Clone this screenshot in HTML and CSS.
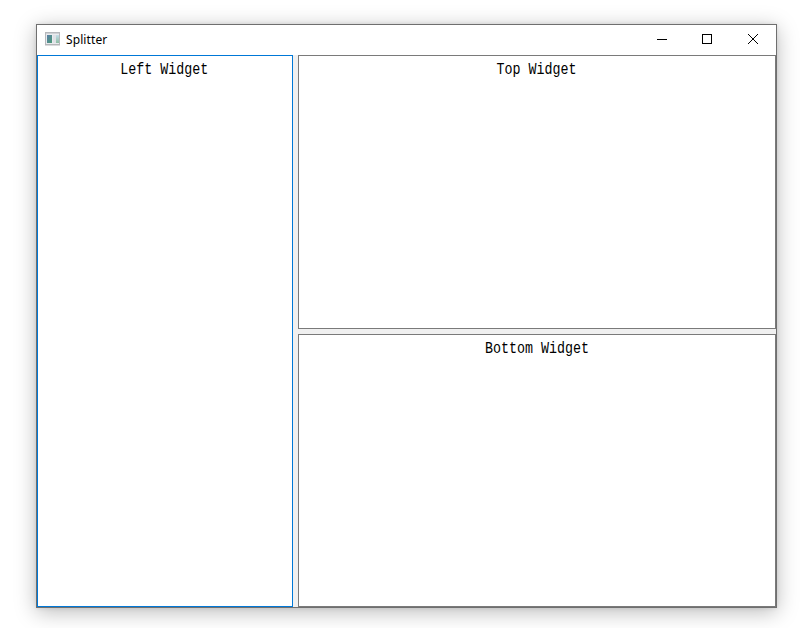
FILE: index.html
```html
<!DOCTYPE html>
<html lang="en">
<head>
<meta charset="utf-8">
<title>Splitter</title>
<link rel="stylesheet" href="styles.css">
</head>
<body>
<div class="window">
  <header class="titlebar">
    <svg class="app-icon" width="16" height="14" viewBox="0 0 16 14">
      <defs>
        <linearGradient id="pane" x1="0" y1="0" x2="1" y2="1">
          <stop offset="0" stop-color="#5b7fa6"/>
          <stop offset="1" stop-color="#4c9b78"/>
        </linearGradient>
        <linearGradient id="side" x1="0" y1="0" x2="0" y2="1">
          <stop offset="0" stop-color="#c3dce8"/>
          <stop offset="1" stop-color="#8fbda4"/>
        </linearGradient>
      </defs>
      <rect x=".5" y=".5" width="14" height="12.5" fill="#e9ebee" stroke="#b6b8bc"/>
      <path d="M1 1.5h13" stroke="#cfd1d5"/>
      <rect x="2" y="3" width="5" height="8" fill="url(#pane)"/>
      <rect x="8" y="3" width="3" height="8" fill="#dfe1e6"/>
      <rect x="11" y="3" width="3" height="8" fill="url(#side)"/>
      <path d="M0 12.5h15" stroke="#b4b6b8"/>
    </svg>
    <h1 class="title">Splitter</h1>
    <div class="controls">
      <button class="control" aria-label="Minimize"><svg width="10" height="10"><path d="M0 5.5h10"/></svg></button>
      <button class="control maximize" aria-label="Maximize"><svg width="10" height="10"><path d="M.5 .5h9v9h-9z"/></svg></button>
      <button class="control close" aria-label="Close"><svg width="10" height="10"><path d="M0 0l10 10M10 0L0 10"/></svg></button>
    </div>
  </header>
  <main class="splitter">
    <section class="pane focused"><span class="label">Left Widget</span></section>
    <div class="column">
      <section class="pane"><span class="label">Top Widget</span></section>
      <section class="pane"><span class="label">Bottom Widget</span></section>
    </div>
  </main>
</div>
</body>
</html>
```
FILE: styles.css
```css
* { box-sizing: border-box; }

body {
  margin: 0;
  height: 628px;
  padding: 24px 24px 20px 36px;
  overflow: hidden;
  background: #fff;
}

.window {
  display: flex;
  flex-direction: column;
  width: 741px;
  height: 584px;
  border: 1px solid #6f6f6f;
  background: #fff;
  box-shadow: 0 0 4px rgba(0, 0, 0, .1), 0 4px 20px rgba(0, 0, 0, .27);
}

.titlebar {
  display: flex;
  align-items: center;
  height: 30px;
  padding-left: 8px;
}

.app-icon { display: block; margin-top: -2px; }

.title {
  margin: 0 0 0 5px;
  font: 400 12px/18px "Noto Sans", "Open Sans", sans-serif;
  letter-spacing: .1px;
  color: #000;
}

.controls {
  display: flex;
  height: 30px;
  margin-left: auto;
}

.control {
  display: flex;
  align-items: center;
  justify-content: center;
  width: 46px;
  height: 28px;
  padding: 0;
  border: 0;
  background: none;
}

.maximize { width: 44px; }

.close {
  width: 47px;
  padding-left: 1px;
}

.control svg {
  display: block;
  fill: none;
  stroke: #000;
  stroke-width: 1;
  shape-rendering: crispEdges;
}

.close svg { shape-rendering: auto; }

.splitter {
  display: grid;
  grid-template-columns: 256px 478px;
  column-gap: 5px;
  height: 552px;
  background: #f0f0f0;
}

.column {
  display: grid;
  grid-template-rows: 274px 273px;
  row-gap: 5px;
}

.pane {
  border: 1px solid #7a7a7a;
  background: #fff;
  text-align: center;
}

.pane.focused { border-color: #0078d7; }

.label {
  display: inline-block;
  margin-top: 5px;
  font: 16px/18px "Liberation Mono", monospace;
  color: #000;
  transform: translateX(-.5px) scaleX(.833);
}
```
